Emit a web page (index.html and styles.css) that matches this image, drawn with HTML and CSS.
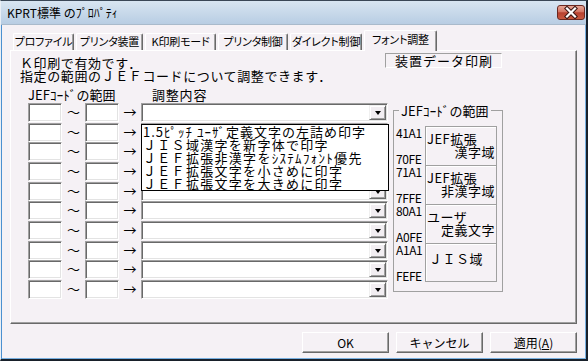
FILE: index.html
```html
<!DOCTYPE html>
<html lang="ja">
<head>
    <meta charset="UTF-8">
    <title>KPRT標準 のﾌﾟﾛﾊﾟﾃｨ</title>
    <link rel="stylesheet" href="styles.css">
</head>
<body>
    <div class="window">
        <div class="titlebar">
            <span class="title">KPRT標準 のﾌﾟﾛﾊﾟﾃｨ</span>
            <div class="close">
                <svg width="26" height="13" viewBox="0 0 26 13">
                    <path d="M9 2.5 L17 10.5 M17 2.5 L9 10.5" stroke="#3a1512" stroke-width="4.2" stroke-linecap="square"/>
                    <path d="M9 2.5 L17 10.5 M17 2.5 L9 10.5" stroke="#fff" stroke-width="2.2" stroke-linecap="square"/>
                </svg>
            </div>
        </div>

        <div class="client">
            <!-- tab strip -->
            <div class="tabs">
                <div class="tab t1">プロファイル</div>
                <div class="tab t2">プリンタ装置</div>
                <div class="tab t3">K印刷モード</div>
                <div class="tab t4">プリンタ制御</div>
                <div class="tab t5">ダイレクト制御</div>
                <div class="tab t6 active">フォント調整</div>
            </div>

            <div class="panel">
                <div class="top">
                    <div class="intro">
                        <p>Ｋ印刷で有効です．</p>
                        <p>指定の範囲のＪＥＦコードについて調整できます．</p>
                    </div>
                    <div class="status">装置データ印刷</div>
                </div>

                <div class="heads">
                    <span class="head-range">JEFｺｰﾄﾞの範囲</span>
                    <span class="head-adjust">調整内容</span>
                </div>

                <div class="main">
                    <div class="rows">
                        <div class="row">
                            <div class="field"></div><span class="sep">～</span>
                            <div class="field"></div><span class="sep arrow">→</span>
                            <div class="combo">
                                <div class="drop-btn"><span class="caret"></span></div>
                                <ul class="droplist">
                                    <li>1.5ﾋﾟｯﾁ ﾕｰｻﾞ定義文字の左詰め印字</li>
                                    <li>ＪＩＳ域漢字を新字体で印字</li>
                                    <li>ＪＥＦ拡張非漢字をｼｽﾃﾑﾌｫﾝﾄ優先</li>
                                    <li>ＪＥＦ拡張文字を小さめに印字</li>
                                    <li>ＪＥＦ拡張文字を大きめに印字</li>
                                </ul>
                            </div>
                        </div>
                        <div class="row">
                            <div class="field"></div><span class="sep">～</span>
                            <div class="field"></div><span class="sep arrow">→</span>
                            <div class="combo"><div class="drop-btn"><span class="caret"></span></div></div>
                        </div>
                        <div class="row">
                            <div class="field"></div><span class="sep">～</span>
                            <div class="field"></div><span class="sep arrow">→</span>
                            <div class="combo"><div class="drop-btn"><span class="caret"></span></div></div>
                        </div>
                        <div class="row">
                            <div class="field"></div><span class="sep">～</span>
                            <div class="field"></div><span class="sep arrow">→</span>
                            <div class="combo"><div class="drop-btn"><span class="caret"></span></div></div>
                        </div>
                        <div class="row">
                            <div class="field"></div><span class="sep">～</span>
                            <div class="field"></div><span class="sep arrow">→</span>
                            <div class="combo"><div class="drop-btn"><span class="caret"></span></div></div>
                        </div>
                        <div class="row">
                            <div class="field"></div><span class="sep">～</span>
                            <div class="field"></div><span class="sep arrow">→</span>
                            <div class="combo"><div class="drop-btn"><span class="caret"></span></div></div>
                        </div>
                        <div class="row">
                            <div class="field"></div><span class="sep">～</span>
                            <div class="field"></div><span class="sep arrow">→</span>
                            <div class="combo"><div class="drop-btn"><span class="caret"></span></div></div>
                        </div>
                        <div class="row">
                            <div class="field"></div><span class="sep">～</span>
                            <div class="field"></div><span class="sep arrow">→</span>
                            <div class="combo"><div class="drop-btn"><span class="caret"></span></div></div>
                        </div>
                        <div class="row">
                            <div class="field"></div><span class="sep">～</span>
                            <div class="field"></div><span class="sep arrow">→</span>
                            <div class="combo"><div class="drop-btn"><span class="caret"></span></div></div>
                        </div>
                        <div class="row">
                            <div class="field"></div><span class="sep">～</span>
                            <div class="field"></div><span class="sep arrow">→</span>
                            <div class="combo"><div class="drop-btn"><span class="caret"></span></div></div>
                        </div>
                    </div>

                    <fieldset class="ranges">
                        <legend>JEFｺｰﾄﾞの範囲</legend>
                        <div class="range">
                            <div class="codes"><span>41A1</span><span>70FE</span></div>
                            <div class="area"><div>JEF拡張</div><div class="right">漢字域</div></div>
                        </div>
                        <div class="range">
                            <div class="codes"><span>71A1</span><span>7FFE</span></div>
                            <div class="area"><div>JEF拡張</div><div class="right">非漢字域</div></div>
                        </div>
                        <div class="range">
                            <div class="codes"><span>80A1</span><span>A0FE</span></div>
                            <div class="area"><div>ユーザ</div><div class="right">定義文字</div></div>
                        </div>
                        <div class="range">
                            <div class="codes"><span>A1A1</span><span>FEFE</span></div>
                            <div class="area"><div class="jis">ＪＩＳ域</div></div>
                        </div>
                    </fieldset>
                </div>
            </div>

            <div class="buttons">
                <button class="btn">OK</button>
                <button class="btn">キャンセル</button>
                <button class="btn">適用(<u>A</u>)</button>
            </div>
        </div>
    </div>
</body>
</html>
```

FILE: styles.css
```css
/* General styles */
* {
    box-sizing: border-box;
}

body {
    margin: 0;
    font-family: "Noto Sans CJK JP", "Noto Sans", sans-serif;
    font-size: 13px;
    color: #000;
    background-color: #f5f1f5;
}

/* Window frame */
.window {
    width: 588px;
    height: 361px;
    display: flex;
    flex-direction: column;
    background-color: #f5f1f5;
    border-top: 1px solid #3a4756;
    border-left: 1px solid #e9eff5;
    border-right: 2px solid #18202a;
    border-bottom: 2px solid #18202a;
    box-shadow: inset 1px 0 #4b90d0, inset -1px 0 #78b0e0, inset 0 -1px #78b0e0;
}

.titlebar {
    height: 24px;
    display: flex;
    align-items: flex-start;
    padding: 4px 1px 0 6px;
    background: linear-gradient(#d8e5f1, #b8cde3);
    border-bottom: 1px solid #a9bacb;
}

.title {
    margin-top: 1px;
    font-size: 12px;
    line-height: 14px;
}

.close {
    margin-left: auto;
    width: 28px;
    height: 15px;
    border: 1px solid #6b2820;
    border-radius: 3px;
    background: linear-gradient(#e7a796 0%, #d47563 45%, #b7412f 52%, #c9593f 100%);
}

.close svg {
    display: block;
}

/* Client area */
.client {
    flex: 1;
    display: flex;
    flex-direction: column;
}

/* Tabs */
.tabs {
    display: flex;
    align-items: flex-end;
    height: 20px;
    margin: 5px 0 0 12px;
    position: relative;
    z-index: 1;
}

.tab {
    height: 17px;
    margin-right: 2px;
    border-top: 1px solid #fff;
    border-left: 1px solid #fff;
    border-right: 1px solid #696969;
    border-radius: 2px 2px 0 0;
    box-shadow: inset -1px 0 #a0a0a0;
    font-size: 11px;
    line-height: 15px;
    text-align: center;
    white-space: nowrap;
    font-feature-settings: "palt";
    letter-spacing: -0.2px;
}

.t1 { width: 61px; }
.t2 { width: 67px; }
.t3 { width: 71px; }
.t4 { width: 70px; }
.t5 { width: 72px; }
.t6 { width: 73px; }

.tab.active {
    height: 21px;
    margin-bottom: -1px;
    background-color: #f5f1f5;
    line-height: 17px;
}

/* Tab panel */
.panel {
    width: 567px;
    height: 274px;
    margin-left: 9px;
    padding: 2px 0 0 9px;
    border-top: 1px solid #fff;
    border-left: 1px solid #fff;
    border-right: 1px solid #696969;
    border-bottom: 1px solid #696969;
    box-shadow: inset -1px -1px #a0a0a0;
}

.top {
    display: flex;
    align-items: flex-start;
}

.intro {
    width: 365px;
    padding-top: 3px;
}

.intro p {
    margin: 0;
    line-height: 13px;
    letter-spacing: 0.6px;
    white-space: nowrap;
}

.status {
    width: 117px;
    height: 15px;
    padding-left: 9px;
    border-top: 1px solid #a0a0a0;
    border-left: 1px solid #a0a0a0;
    border-bottom: 1px solid #fff;
    border-right: 1px solid #fff;
    line-height: 13px;
    letter-spacing: 1px;
    white-space: nowrap;
}

.heads {
    display: flex;
    margin-top: 6px;
    padding-left: 8px;
    line-height: 13px;
    white-space: nowrap;
}

.head-range {
    width: 124px;
    letter-spacing: 0.1px;
}

.head-adjust {
    letter-spacing: 0.8px;
}

.main {
    display: flex;
    align-items: flex-start;
    gap: 5px;
    margin-top: 2px;
    padding-left: 8px;
}

/* Code rows */
.rows {
    width: 360px;
}

.row {
    display: flex;
    height: 19.67px;
}

.field,
.combo {
    height: 19px;
    background-color: #fff;
    border: 1px solid;
    border-color: #a0a0a0 #fff #fff #a0a0a0;
    box-shadow: inset 1px 1px #696969, inset -1px -1px #e3e3e3;
}

.field {
    width: 34px;
}

.sep {
    width: 23px;
    line-height: 18px;
    text-align: center;
}

.sep.arrow {
    width: 22px;
}

.combo {
    width: 247px;
    position: relative;
    display: flex;
    justify-content: flex-end;
    padding: 1px;
}

.drop-btn {
    width: 17px;
    height: 15px;
    display: flex;
    align-items: center;
    justify-content: center;
    background-color: #f2eef2;
    border: 1px solid;
    border-color: #f0f0f0 #696969 #696969 #f0f0f0;
    box-shadow: inset 1px 1px #fff, inset -1px -1px #a0a0a0;
}

.caret {
    width: 0;
    height: 0;
    margin-top: 1px;
    border-left: 3.5px solid transparent;
    border-right: 3.5px solid transparent;
    border-top: 4px solid #000;
}

.droplist {
    position: absolute;
    top: 20px;
    left: -1px;
    width: 248px;
    margin: 0;
    padding: 0;
    list-style: none;
    background-color: #fff;
    border: 1px solid #000;
    z-index: 2;
}

.droplist li {
    height: 13px;
    padding-left: 1px;
    line-height: 13px;
    letter-spacing: 1.3px;
    white-space: nowrap;
}

.droplist li:first-child {
    letter-spacing: 1px;
}

/* Range group box */
.ranges {
    width: 110px;
    height: 189px;
    margin: 0;
    padding: 8px 0 0 0;
    border: 1px solid #a0a0a0;
    min-width: 0;
}

.ranges legend {
    margin-left: 5px;
    padding: 0 2px;
    line-height: 15px;
    letter-spacing: 0.1px;
    white-space: nowrap;
}

.range {
    display: flex;
    height: 39px;
}

.codes {
    width: 31px;
    padding-left: 2px;
    display: flex;
    flex-direction: column;
    justify-content: space-between;
    font-size: 12px;
    line-height: 13px;
    letter-spacing: -0.4px;
}

.area {
    width: 72px;
    padding: 5px 1px 0;
    border: 1px solid #a0a0a0;
    border-bottom: none;
    box-shadow: inset 1px 1px #fff;
    line-height: 13px;
    letter-spacing: 0.5px;
    white-space: nowrap;
}

.range:last-child .area {
    border-bottom: 1px solid #a0a0a0;
}

.area .right {
    text-align: right;
}

.area .jis {
    padding-top: 3px;
    padding-left: 2px;
}

/* Dialog buttons */
.buttons {
    display: flex;
    justify-content: flex-end;
    gap: 7px;
    margin-top: 8px;
    padding-right: 9px;
}

.btn {
    width: 87px;
    height: 21px;
    padding: 0;
    font-family: inherit;
    font-size: 12px;
    line-height: 17px;
    color: #000;
    background-color: #f5f1f5;
    border: 1px solid;
    border-color: #fff #696969 #696969 #fff;
    box-shadow: inset -1px -1px #a0a0a0;
    border-radius: 0;
}
```
